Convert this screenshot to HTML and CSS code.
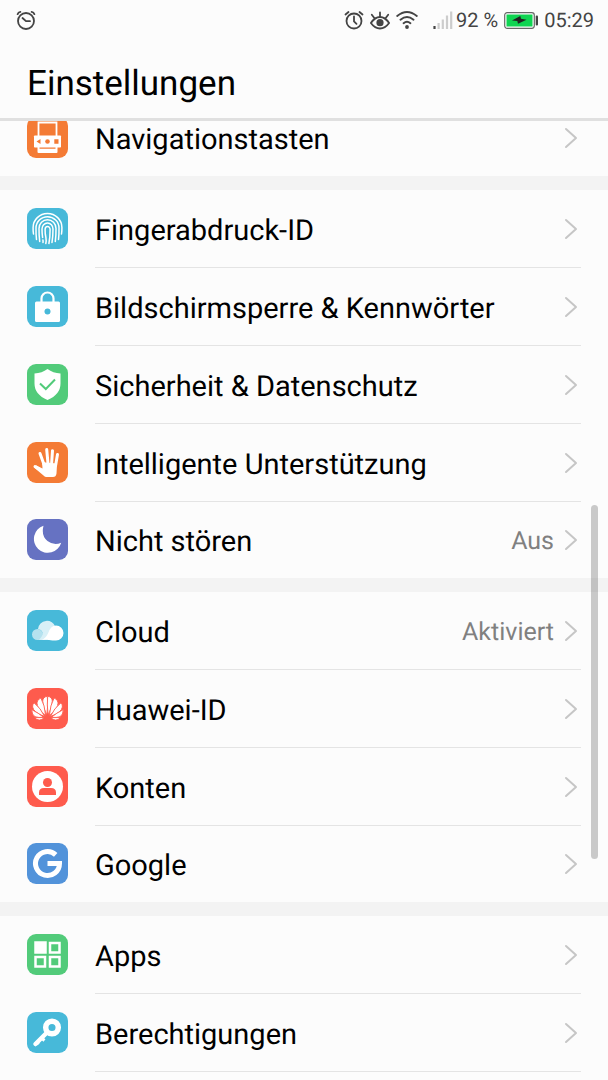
FILE: index.html
```html
<!DOCTYPE html>
<html lang="de">
<head>
    <meta charset="UTF-8">
    <meta name="viewport" content="width=device-width, initial-scale=1.0">
    <title>Einstellungen</title>
    <link rel="stylesheet" href="styles.css">
</head>
<body>
    <!-- shared shapes -->
    <svg class="defs" aria-hidden="true">
        <symbol id="chevron" viewBox="0 0 14 22">
            <path d="M2 2l10 9-10 9" fill="none" stroke="#c6c6c6" stroke-width="2" stroke-linecap="round" stroke-linejoin="round"/>
        </symbol>
        <symbol id="petals" viewBox="0 0 41 41">
            <path d="M19.900 27Q15.500 19 15.700 13q.2-4 4.600-4.700 1 8-.4 18.700z"/>
            <path d="M18.600 27.700Q10.200 20.500 9.900 15q.2-3.700 4-5 4 7 4.700 17.700z"/>
            <path d="M17.600 28.500Q6.500 24.500 5.600 19q-.2-2.500 1.400-4.200Q13.800 20 17.600 28.500z"/>
            <path d="M16.800 29.400q-5.300.4-8.700-.6-3.400-2-3.400-7.200 6.900 3.400 12.100 7.800z"/>
            <path d="M17.200 29.600q-4.700 5-9.800 0z"/>
        </symbol>
    </svg>

    <div class="status-bar">
        <svg class="status-icon" viewBox="0 0 20 20" fill="none" stroke="#444" stroke-width="1.8" stroke-linecap="round">
            <circle cx="10" cy="11" r="8"/>
            <path d="M6.5 8l3.5 3.2h4M1.600 4.200q.6-2 2.800-2.400M18.400 4.200q-.6-2-2.800-2.400"/>
        </svg>
        <div class="status-right">
            <svg class="status-icon" viewBox="0 0 20 20" fill="none" stroke="#444" stroke-width="1.8" stroke-linecap="round">
                <circle cx="10" cy="11" r="7.500"/>
                <path d="M10 6.500v4.800l2.500 2.500M1.500 4.500l3-2.500M18.500 4.500l-3-2.500"/>
            </svg>
            <svg class="status-icon" viewBox="0 0 20 20" fill="none" stroke="#444" stroke-width="1.8" stroke-linecap="round">
                <path d="M.9 13q4-6 9.100-6t9.100 6q-4 5.500-9.100 5.500T.9 13z"/>
                <circle cx="10" cy="12.700" r="3.600" fill="#444" stroke="none"/>
                <path d="M10 6.500V2.500M4.300 8L1.800 4.800M15.700 8l2.500-3.200"/>
            </svg>
            <svg class="wifi" viewBox="0 0 22 20" fill="none" stroke="#444" stroke-width="1.900" stroke-linecap="round">
                <path d="M1.200 6q9.800-8 19.600 0M4.500 9.700q6.500-5.500 13 0M7.600 13.200q3.400-2.800 6.800 0"/>
                <circle cx="11" cy="17" r="1.900" fill="#444" stroke="none"/>
            </svg>
            <svg class="signal" viewBox="0 0 20 20" stroke="#ccc" stroke-width="2.200">
                <path d="M1.500 16v3" stroke="#444"/>
                <path d="M5.600 13v6M9.800 9.500V19M14 5.500V19M18.200 1.500V19"/>
            </svg>
            <span class="percent">92 %</span>
            <svg class="battery" viewBox="0 0 34 17">
                <rect x=".7" y=".7" width="29.600" height="15.600" rx="2.500" fill="#fff" stroke="#666" stroke-width="1.200"/>
                <rect x="2.500" y="2.500" width="26" height="12" fill="#0fd451"/>
                <path d="M8 8.500l8.300-4.500.7 2.800 5.500.9-8.500 4-.7-2.600z" fill="#222"/>
                <rect x="31.700" y="3.500" width="2.300" height="10" rx="1" fill="#444"/>
            </svg>
            <span class="clock">05:29</span>
        </div>
    </div>

    <header class="header">
        <h1>Einstellungen</h1>
    </header>

    <main class="content">
        <nav class="list">
            <section class="group">
                <a class="row" href="#">
                    <svg class="icon orange" viewBox="0 0 41 41">
                        <path d="M11.500 5.500h18v15h-18z" fill="none" stroke="#fff" stroke-width="1.800"/>
                        <rect x="7" y="18.500" width="27" height="12" rx=".8" fill="#fff"/>
                        <rect x="10.500" y="29" width="20" height="7" rx="1" fill="#fff"/>
                        <path d="M12.500 30.500h16v1.200h-16zM13.500 22v5l-4-2.500zM27.300 22.300h4.200v4.400h-4.200z" fill="#f47b35"/>
                        <circle cx="20.500" cy="24.500" r="2.300" fill="#f47b35"/>
                    </svg>
                    <span class="row-body"><span class="label">Navigationstasten</span><svg class="chevron"><use href="#chevron"/></svg></span>
                </a>
            </section>

            <section class="group">
                <a class="row" href="#">
                    <svg class="icon blue" viewBox="0 0 41 41" fill="none" stroke="#fff" stroke-width="1.500" stroke-linecap="round">
                        <path d="M6.500 26q-.5-3-.4-6.500a14.400 14 0 0 1 28.800 0q.1 3.500-.4 6.500"/>
                        <path d="M9.500 31.500q-.6-6-.5-11.500a11.500 11.300 0 0 1 23 0q.1 5.500-.5 11.500"/>
                        <path d="M12.700 33.500q-.8-7-.7-13a8.500 8.700 0 0 1 17 0q.1 6-.7 13"/>
                        <path d="M16 34.500q.2-1.200-.1-2.500M15.600 29.500q-.6-4-.6-8.500a5.500 6 0 0 1 11 0q0 7-1 13.500"/>
                        <path d="M18.800 35.500q.7-2.500.1-6-.9-4-.8-8a2.500 3 0 0 1 5 0q0 8-1.200 14"/>
                    </svg>
                    <span class="row-body"><span class="label">Fingerabdruck-ID</span><svg class="chevron"><use href="#chevron"/></svg></span>
                </a>
                <a class="row" href="#">
                    <svg class="icon blue" viewBox="0 0 41 41">
                        <path d="M14.500 17v-4.500a6 6 0 0 1 12 0V17" fill="none" stroke="#fff" stroke-width="2.200"/>
                        <rect x="8" y="15.500" width="25" height="20.500" rx="1.500" fill="#fff"/>
                        <circle cx="20.500" cy="25.500" r="3" fill="#47b9d9"/>
                    </svg>
                    <span class="row-body"><span class="label">Bildschirmsperre &amp; Kennwörter</span><svg class="chevron"><use href="#chevron"/></svg></span>
                </a>
                <a class="row" href="#">
                    <svg class="icon green" viewBox="0 0 41 41">
                        <path d="M20.500 5q5.500 4 13 4.500v10q0 11-13 16.500Q7.500 30.500 7.500 19.500v-10Q15 9 20.500 5z" fill="#fff"/>
                        <path d="M13 19.500l5.800 5.500 9.200-9.500" fill="none" stroke="#52cb7a" stroke-width="2"/>
                    </svg>
                    <span class="row-body"><span class="label">Sicherheit &amp; Datenschutz</span><svg class="chevron"><use href="#chevron"/></svg></span>
                </a>
                <a class="row" href="#">
                    <svg class="icon orange" viewBox="0 0 41 41">
                        <path d="M13 11.500l4 11M19.700 7.500l1.300 14M25.500 8.700l-.9 13M30.500 12.500l-1.900 11M8 24.500l7.500 5" fill="none" stroke="#fff" stroke-width="3" stroke-linecap="round"/>
                        <path d="M15 19.500l3.500 1 11.600 1-.6 10q-.5 3.500-3.500 3.500h-6.500q-1.500 0-3-1.500L7 25.500l2-2.200 6.500 3.200z" fill="#fff"/>
                    </svg>
                    <span class="row-body"><span class="label">Intelligente Unterstützung</span><svg class="chevron"><use href="#chevron"/></svg></span>
                </a>
                <a class="row" href="#">
                    <svg class="icon violet" viewBox="0 0 41 41">
                        <path d="M16.500 6.700A13.900 13.900 0 1 0 34.200 23.700Q27 27 20.500 22T16.500 6.700z" fill="#fff"/>
                    </svg>
                    <span class="row-body"><span class="label">Nicht stören</span><span class="value">Aus</span><svg class="chevron"><use href="#chevron"/></svg></span>
                </a>
            </section>

            <section class="group">
                <a class="row" href="#">
                    <svg class="icon blue" viewBox="0 0 41 41">
                        <path d="M10.500 30a5.500 5.500 0 0 1 0-11 5 5 0 0 1 4.200 2.200L20 30z" fill="#b5e2ef"/>
                        <path d="M12 30q6 0 9.500-3.500l7-9.500a9 9 0 0 0-17.500 2q4 .5 5 5-1.500 3.500-4 6z" fill="#d8f0f7"/>
                        <path d="M14 30q4.500-1.200 7-6.500 2.500-8 8-8a7.500 7.500 0 0 1 0 15q-3.500 0-7-.5t-8 0z" fill="#fff"/>
                    </svg>
                    <span class="row-body"><span class="label">Cloud</span><span class="value">Aktiviert</span><svg class="chevron"><use href="#chevron"/></svg></span>
                </a>
                <a class="row" href="#">
                    <svg class="icon red" viewBox="0 0 41 41" fill="#fff" stroke="#fe5b4d" stroke-width=".9">
                        <use href="#petals" width="41" height="41"/>
                        <use href="#petals" width="41" height="41" transform="translate(41 0) scale(-1 1)"/>
                    </svg>
                    <span class="row-body"><span class="label">Huawei-ID</span><svg class="chevron"><use href="#chevron"/></svg></span>
                </a>
                <a class="row" href="#">
                    <svg class="icon red" viewBox="0 0 41 41">
                        <circle cx="20.500" cy="20.500" r="15.500" fill="#fff"/>
                        <circle cx="20.500" cy="16.500" r="4.500" fill="#fe5b4d"/>
                        <path d="M12 29v-2.500q0-4.500 5-4.500h7q5 0 5 4.500V29z" fill="#fe5b4d"/>
                    </svg>
                    <span class="row-body"><span class="label">Konten</span><svg class="chevron"><use href="#chevron"/></svg></span>
                </a>
                <a class="row" href="#">
                    <svg class="icon sky" viewBox="0 0 41 41">
                        <path d="M28.700 11.800A12 12 0 1 0 32.500 20.500H20.500" fill="none" stroke="#fff" stroke-width="5"/>
                    </svg>
                    <span class="row-body"><span class="label">Google</span><svg class="chevron"><use href="#chevron"/></svg></span>
                </a>
            </section>

            <section class="group">
                <a class="row" href="#">
                    <svg class="icon green" viewBox="0 0 41 41" fill="none" stroke="#fff" stroke-width="2.500">
                        <rect x="8.500" y="8.500" width="10" height="10" fill="#fff"/>
                        <rect x="23" y="9" width="9.500" height="9.500"/>
                        <rect x="8.500" y="23" width="9.500" height="9.500"/>
                        <rect x="23" y="23" width="9.500" height="9.500"/>
                    </svg>
                    <span class="row-body"><span class="label">Apps</span><svg class="chevron"><use href="#chevron"/></svg></span>
                </a>
                <a class="row" href="#">
                    <svg class="icon blue" viewBox="0 0 41 41" fill="none" stroke="#fff">
                        <circle cx="25" cy="15.500" r="6.300" stroke-width="5.500"/>
                        <path d="M19.500 21L8.500 32" stroke-width="4.500" stroke-linecap="round"/>
                        <path d="M14.500 26l3 2.500M10 30.500l1.800 1.700" stroke-width="3"/>
                    </svg>
                    <span class="row-body"><span class="label">Berechtigungen</span><svg class="chevron"><use href="#chevron"/></svg></span>
                </a>
                <a class="row" href="#" aria-label="Weitere Einstellungen"><span class="row-body"></span></a>
            </section>
        </nav>
        <div class="scrollbar"></div>
    </main>
</body>
</html>
```

FILE: styles.css
```css
* { box-sizing: border-box; }
body { margin: 0; height: 100vh; display: flex; flex-direction: column; overflow: hidden; background-color: #fcfcfc; color: #000; font-family: Roboto, "Noto Sans", sans-serif; text-rendering: geometricPrecision; }
.defs { position: absolute; width: 0; height: 0; }

/* status bar */
.status-bar { flex: none; display: flex; justify-content: space-between; align-items: center; height: 40px; padding: 0 14px 0 16px; color: #444; font-size: 20px; line-height: 24px; }
.status-right { display: flex; align-items: center; gap: 6px; }
.status-icon { width: 20px; height: 20px; }
.wifi { width: 22px; height: 20px; margin-right: 9px; }
.signal { width: 20px; height: 20px; }
.percent { margin-left: -3px; }
.battery { width: 34px; height: 17px; }

/* title */
.header { flex: none; height: 81px; padding: 4px 27px 0; border-bottom: 3px solid #e0e0e0; }
h1 { margin: 0; font-size: 35px; font-weight: 400; line-height: 80px; }

/* list, scrolled a little under the title */
.content { position: relative; flex: 1; min-height: 0; overflow: hidden; }
.list { margin-top: -21px; }
.group + .group { border-top: 14px solid #f3f3f3; }
.row { display: flex; align-items: center; height: 78px; padding: 0 27px; color: inherit; text-decoration: none; }
.row:last-child { height: 76px; }
.icon { flex: none; width: 41px; height: 41px; margin: 0 27px 2px 0; border-radius: 9px; }
.row-body { flex: 1; display: flex; align-items: center; height: 100%; border-bottom: 1px solid #e4e4e4; }
.row:last-child .row-body { border-bottom: none; }
.group:last-child .row:last-child { height: 78px; }
.label { flex: 1; padding-top: 4px; font-size: 29px; line-height: 40px; }
.value { margin-right: 10px; padding-top: 4px; color: #808080; font-size: 25px; line-height: 32px; }
.chevron { flex: none; width: 14px; height: 22px; margin-right: 3px; }
.scrollbar { position: absolute; top: 40%; right: 10px; width: 7px; height: 37%; border-radius: 4px; background-color: rgba(0, 0, 0, 0.2); }

.orange { background-color: #f47b35; }
.blue { background-color: #47b9d9; }
.green { background-color: #52cb7a; }
.violet { background-color: #6672c2; }
.red { background-color: #fe5b4d; }
.sky { background-color: #5293da; }
```
